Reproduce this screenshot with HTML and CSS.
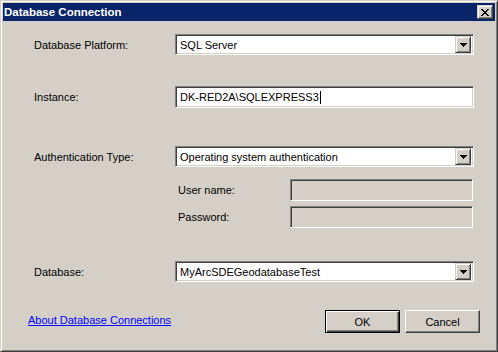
FILE: index.html
```html
<!DOCTYPE html>
<html lang="en">
<head>
    <meta charset="UTF-8">
    <title>Database Connection</title>
    <link rel="stylesheet" href="styles.css">
</head>
<body>
    <div class="window">
        <div class="title-bar">
            <span class="title">Database Connection</span>
            <span class="close-btn">
                <svg width="8" height="7" viewBox="0 0 8 7" shape-rendering="crispEdges">
                    <path d="M0 0h2v1h-2z M6 0h2v1h-2z M1 1h2v1h-2z M5 1h2v1h-2z M2 2h4v1h-4z M3 3h2v1h-2z M2 4h4v1h-4z M1 5h2v1h-2z M5 5h2v1h-2z M0 6h2v1h-2z M6 6h2v1h-2z" fill="#000"/>
                </svg>
            </span>
        </div>
        <div class="content">
            <div class="row row-platform">
                <label class="label">Database Platform:</label>
                <div class="combo">
                    <span class="combo-text">SQL Server</span>
                    <span class="drop-btn">
                        <svg width="7" height="4" viewBox="0 0 7 4" shape-rendering="crispEdges">
                            <path d="M0 0h7v1h-7z M1 1h5v1h-5z M2 2h3v1h-3z M3 3h1v1h-1z" fill="#000"/>
                        </svg>
                    </span>
                </div>
            </div>
            <div class="row row-instance">
                <label class="label">Instance:</label>
                <div class="textbox">DK-RED2A\SQLEXPRESS3<span class="caret"></span></div>
            </div>
            <div class="row row-auth">
                <label class="label">Authentication Type:</label>
                <div class="combo">
                    <span class="combo-text">Operating system authentication</span>
                    <span class="drop-btn">
                        <svg width="7" height="4" viewBox="0 0 7 4" shape-rendering="crispEdges">
                            <path d="M0 0h7v1h-7z M1 1h5v1h-5z M2 2h3v1h-3z M3 3h1v1h-1z" fill="#000"/>
                        </svg>
                    </span>
                </div>
            </div>
            <div class="subrow subrow-user">
                <label class="label">User name:</label>
                <div class="textbox disabled"></div>
            </div>
            <div class="subrow subrow-pass">
                <label class="label">Password:</label>
                <div class="textbox disabled"></div>
            </div>
            <div class="row row-database">
                <label class="label">Database:</label>
                <div class="combo">
                    <span class="combo-text">MyArcSDEGeodatabaseTest</span>
                    <span class="drop-btn">
                        <svg width="7" height="4" viewBox="0 0 7 4" shape-rendering="crispEdges">
                            <path d="M0 0h7v1h-7z M1 1h5v1h-5z M2 2h3v1h-3z M3 3h1v1h-1z" fill="#000"/>
                        </svg>
                    </span>
                </div>
            </div>
            <div class="footer">
                <a class="help-link" href="#">About Database Connections</a>
                <div class="buttons">
                    <button class="btn default">OK</button>
                    <button class="btn">Cancel</button>
                </div>
            </div>
        </div>
    </div>
</body>
</html>
```

FILE: styles.css
```css
html, body {
    margin: 0;
    padding: 0;
    background-color: #d4d0c8;
}

body {
    font-family: "Liberation Sans", Arial, sans-serif;
    font-size: 11px;
    color: #000;
}

.window {
    width: 498px;
    height: 352px;
    box-sizing: border-box;
    border: 1px solid;
    border-color: #d4d0c8 #404040 #404040 #d4d0c8;
    box-shadow: inset 1px 1px #fff, inset -1px -1px #808080;
    padding: 2px;
    background-color: #d4d0c8;
}

.title-bar {
    height: 18px;
    background-color: #0a246a;
    display: flex;
    align-items: center;
    justify-content: space-between;
    padding: 0 2px 0 1px;
}

.title {
    color: #fff;
    font-weight: bold;
    font-size: 11.5px;
}

.close-btn {
    width: 16px;
    height: 14px;
    box-sizing: border-box;
    border: 1px solid;
    border-color: #d4d0c8 #404040 #404040 #d4d0c8;
    box-shadow: inset 1px 1px #fff, inset -1px -1px #808080;
    background-color: #d4d0c8;
    display: flex;
    align-items: center;
    justify-content: center;
}

.close-btn svg {
    display: block;
    margin-left: -1px;
}

.row {
    display: grid;
    grid-template-columns: 141px 299px;
    align-items: center;
    padding-left: 31px;
}

.subrow {
    display: grid;
    grid-template-columns: 112px 183px;
    align-items: center;
    padding-left: 175px;
}

.row-platform { margin-top: 13px; }
.row-instance { margin-top: 31px; }
.row-auth { margin-top: 38px; }
.subrow-user { margin-top: 12px; }
.subrow-pass { margin-top: 5px; }
.row-database { margin-top: 33px; }

.combo, .textbox {
    box-sizing: border-box;
    border: 1px solid;
    border-color: #808080 #fff #fff #808080;
    box-shadow: inset 1px 1px #404040, inset -1px -1px #d4d0c8;
    background-color: #fff;
    display: flex;
    align-items: center;
}

.combo {
    height: 21px;
    padding: 2px;
}

.combo-text {
    flex: 1;
    padding-left: 2px;
    white-space: nowrap;
}

.drop-btn {
    width: 16px;
    height: 17px;
    box-sizing: border-box;
    border: 1px solid;
    border-color: #d4d0c8 #404040 #404040 #d4d0c8;
    box-shadow: inset 1px 1px #fff, inset -1px -1px #808080;
    background-color: #d4d0c8;
    display: flex;
    align-items: center;
    justify-content: center;
}

.drop-btn svg {
    display: block;
}

.textbox {
    height: 22px;
    padding-left: 4px;
}

.textbox.disabled {
    background-color: #d4d0c8;
}

.caret {
    display: inline-block;
    width: 1px;
    height: 13px;
    background-color: #000;
    margin-left: 1px;
}

.footer {
    margin-top: 28px;
    display: flex;
    align-items: center;
    justify-content: space-between;
    padding-left: 25px;
    padding-right: 15px;
}

.help-link {
    color: #0000ff;
    text-decoration: underline;
    margin-top: -4px;
}

.buttons {
    display: flex;
    gap: 5px;
}

.btn {
    width: 75px;
    height: 23px;
    box-sizing: border-box;
    font-family: "Liberation Sans", Arial, sans-serif;
    font-size: 11px;
    color: #000;
    background-color: #d4d0c8;
    border: 1px solid;
    border-color: #fff #404040 #404040 #fff;
    box-shadow: inset -1px -1px #808080;
    padding: 0;
}

.btn.default {
    border: 1px solid #000;
    box-shadow: inset 1px 1px #fff, inset -1px -1px #404040, inset -2px -2px #808080;
}
```
